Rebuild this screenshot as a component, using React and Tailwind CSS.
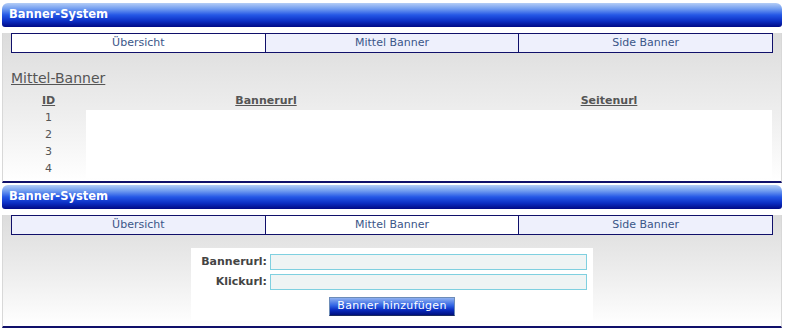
import { useState } from "react";

const font = { fontFamily: '"DejaVu Sans", Verdana, sans-serif' };

const tabs = ["Übersicht", "Mittel Banner", "Side Banner"];

function Header() {
  return (
    <div className="h-[24px] rounded-t-[6px] rounded-b-[3px] bg-[linear-gradient(to_bottom,#b4cdf6_0%,#6f9bf0_25%,#2457e6_50%,#0c2fc4_75%,#000a86_100%)] pl-[7px] flex items-center">
      <span className="text-[11.5px] font-bold text-white">Banner-System</span>
    </div>
  );
}

function Tabs({ active }) {
  return (
    <div className="mx-[8px] mt-[6px] flex h-[20px] border border-[#10106a]">
      {tabs.map((t, i) => (
        <div
          key={t}
          className={
            "flex-1 flex items-center justify-center text-[11px] text-[#3a5688] " +
            (i > 0 ? "border-l border-[#10106a] " : "") +
            (i === active ? "bg-white" : "bg-[#eef0fc]")
          }
        >
          {t}
        </div>
      ))}
    </div>
  );
}

function Panel({ active, children }) {
  return (
    <div>
      <Header />
      <div className="border-x border-[#d8d8d8] border-b-2 border-b-[#10106a] bg-[linear-gradient(to_bottom,#dcdcdc_0%,#f0f0f0_60%,#ffffff_100%)]">
        <Tabs active={active} />
        {children}
      </div>
    </div>
  );
}

export default function App() {
  const [rows] = useState([1, 2, 3, 4]);

  return (
    <div className="w-[782px] pl-[2px] pt-[3px] bg-white" style={font}>
      <Panel active={0}>
        <div className="pl-[8px] pt-[16px] text-[14px] text-[#555] underline leading-[18px]">Mittel-Banner</div>
        <div className="ml-[8px] mt-[5px] w-[761px] pb-[3px]">
          <div className="flex h-[18px] items-center text-[11px] font-bold text-[#555] underline">
            <div className="w-[75px] text-center">ID</div>
            <div className="w-[360px] text-center">Bannerurl</div>
            <div className="flex-1 text-center">Seitenurl</div>
          </div>
          {rows.map((r) => (
            <div key={r} className="flex h-[17px] items-center text-[11px] text-[#555]">
              <div className="w-[75px] text-center">{r}</div>
              <div className="flex-1 h-full bg-white" />
            </div>
          ))}
        </div>
      </Panel>

      <div className="h-[2px]" />

      <Panel active={1}>
        <div className="flex justify-center pt-[13px] pb-[5px]">
          <div className="w-[402px] bg-white px-[6px] pt-[6px] pb-[5px] text-[11px]">
            <div className="flex items-center gap-[3px] h-[16px]">
              <div className="w-[70px] text-right font-bold text-[#444]">Bannerurl:</div>
              <div className="w-[317px] h-[16px] border border-[#7fd0e0] bg-[#eff4f4]" />
            </div>
            <div className="flex items-center gap-[3px] h-[16px] mt-[4px]">
              <div className="w-[70px] text-right font-bold text-[#444]">Klickurl:</div>
              <div className="w-[317px] h-[16px] border border-[#7fd0e0] bg-[#eff4f4]" />
            </div>
            <div className="flex justify-center mt-[7px]">
              <button className="w-[126px] h-[19px] border border-[#6d8cb8] border-b-[#1a2a60] bg-[linear-gradient(to_bottom,#8fb1f0_0%,#2f62e4_45%,#0a2cc0_70%,#00107e_100%)] text-[11px] text-white tracking-[0.3px]">
                Banner hinzufügen
              </button>
            </div>
          </div>
        </div>
      </Panel>
    </div>
  );
}
